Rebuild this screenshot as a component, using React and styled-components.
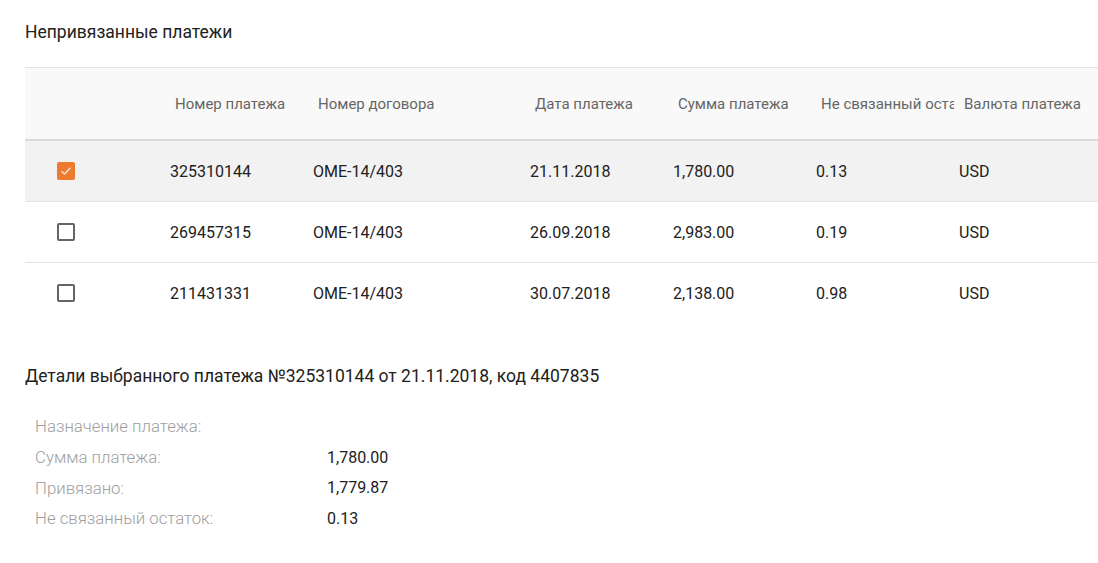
import React from "react";
import styled, { createGlobalStyle } from "styled-components";

const Global = createGlobalStyle`
  html, body { margin: 0; padding: 0; background: #fff; overflow: hidden; }
  body { font-family: Roboto, "Noto Sans", sans-serif; color: #212121; }
`;

const Page = styled.div`
  padding: 22px 0 30px 25px;
`;

const SectionTitle = styled.h2`
  margin: 0;
  font-size: 17.5px;
  line-height: 20px;
  font-weight: 400;
  color: #212121;
`;

const Table = styled.div`
  margin-top: 25px;
  border-top: 1px solid #e3e3e3;
  width: calc(100% + 40px);
`;

const cols = "140px 143px 217px 143px 143px 143px 1fr";

const HeaderRow = styled.div`
  display: grid;
  grid-template-columns: ${cols};
  height: 71px;
  align-items: center;
  background: #f9f9f9;
  border-bottom: 2px solid #d9d9d9;
`;

const HeaderCell = styled.div`
  padding-left: 10px;
  font-size: 15px;
  color: #666;
  white-space: nowrap;
  overflow: hidden;
  text-overflow: clip;
`;

const Row = styled.div`
  display: grid;
  grid-template-columns: ${cols};
  height: 60px;
  align-items: center;
  background: ${(p) => (p.$selected ? "#f2f2f2" : "#fff")};
  border-bottom: ${(p) => (p.$last ? "none" : "1px solid #e3e3e3")};
`;

const Cell = styled.div`
  padding-left: 5px;
  font-size: 16px;
  color: #212121;
  white-space: nowrap;
`;

const CheckCell = styled.div`
  padding-left: 32px;
  display: flex;
  align-items: center;
`;

const Box = styled.div`
  width: 18px;
  height: 18px;
  box-sizing: border-box;
  border-radius: 2px;
  border: 2px solid ${(p) => (p.$checked ? "#ee7a30" : "#656565")};
  background: ${(p) => (p.$checked ? "#ee7a30" : "#fff")};
  display: flex;
  align-items: center;
  justify-content: center;
`;

const DetailsTitle = styled(SectionTitle)`
  margin-top: 43px;
`;

const DetailsList = styled.div`
  margin-top: 25px;
  padding-left: 10px;
  display: grid;
  grid-template-columns: 292px auto;
  grid-auto-rows: 30.7px;
  align-items: center;
`;

const Label = styled.div`
  font-size: 16.8px;
  font-weight: 300;
  color: #9e9e9e;
`;

const Value = styled.div`
  font-size: 16px;
  color: #212121;
`;

const Checkbox = ({ checked }) => (
  <Box $checked={checked}>
    {checked && (
      <svg width="12" height="10" viewBox="0 0 12 10">
        <path d="M1.5 5.2 L4.5 8 L10.5 1.8" fill="none" stroke="#fbe3d2" strokeWidth="1.4" />
      </svg>
    )}
  </Box>
);

const headers = [
  "",
  "Номер платежа",
  "Номер договора",
  "Дата платежа",
  "Сумма платежа",
  "Не связанный остаток",
  "Валюта платежа",
];

const rows = [
  { id: "325310144", contract: "OME-14/403", date: "21.11.2018", sum: "1,780.00", rest: "0.13", cur: "USD", checked: true },
  { id: "269457315", contract: "OME-14/403", date: "26.09.2018", sum: "2,983.00", rest: "0.19", cur: "USD" },
  { id: "211431331", contract: "OME-14/403", date: "30.07.2018", sum: "2,138.00", rest: "0.98", cur: "USD" },
];

const details = [
  ["Назначение платежа:", ""],
  ["Сумма платежа:", "1,780.00"],
  ["Привязано:", "1,779.87"],
  ["Не связанный остаток:", "0.13"],
];

export default function App() {
  return (
    <Page>
      <Global />
      <SectionTitle>Непривязанные платежи</SectionTitle>
      <Table>
        <HeaderRow>
          {headers.map((h, i) => (
            <HeaderCell key={i}>{h}</HeaderCell>
          ))}
        </HeaderRow>
        {rows.map((r, i) => (
          <Row key={r.id} $selected={r.checked} $last={i === rows.length - 1}>
            <CheckCell>
              <Checkbox checked={!!r.checked} />
            </CheckCell>
            <Cell>{r.id}</Cell>
            <Cell>{r.contract}</Cell>
            <Cell>{r.date}</Cell>
            <Cell>{r.sum}</Cell>
            <Cell>{r.rest}</Cell>
            <Cell>{r.cur}</Cell>
          </Row>
        ))}
      </Table>
      <DetailsTitle>Детали выбранного платежа №325310144 от 21.11.2018, код 4407835</DetailsTitle>
      <DetailsList>
        {details.map(([l, v]) => (
          <React.Fragment key={l}>
            <Label>{l}</Label>
            <Value>{v}</Value>
          </React.Fragment>
        ))}
      </DetailsList>
    </Page>
  );
}
